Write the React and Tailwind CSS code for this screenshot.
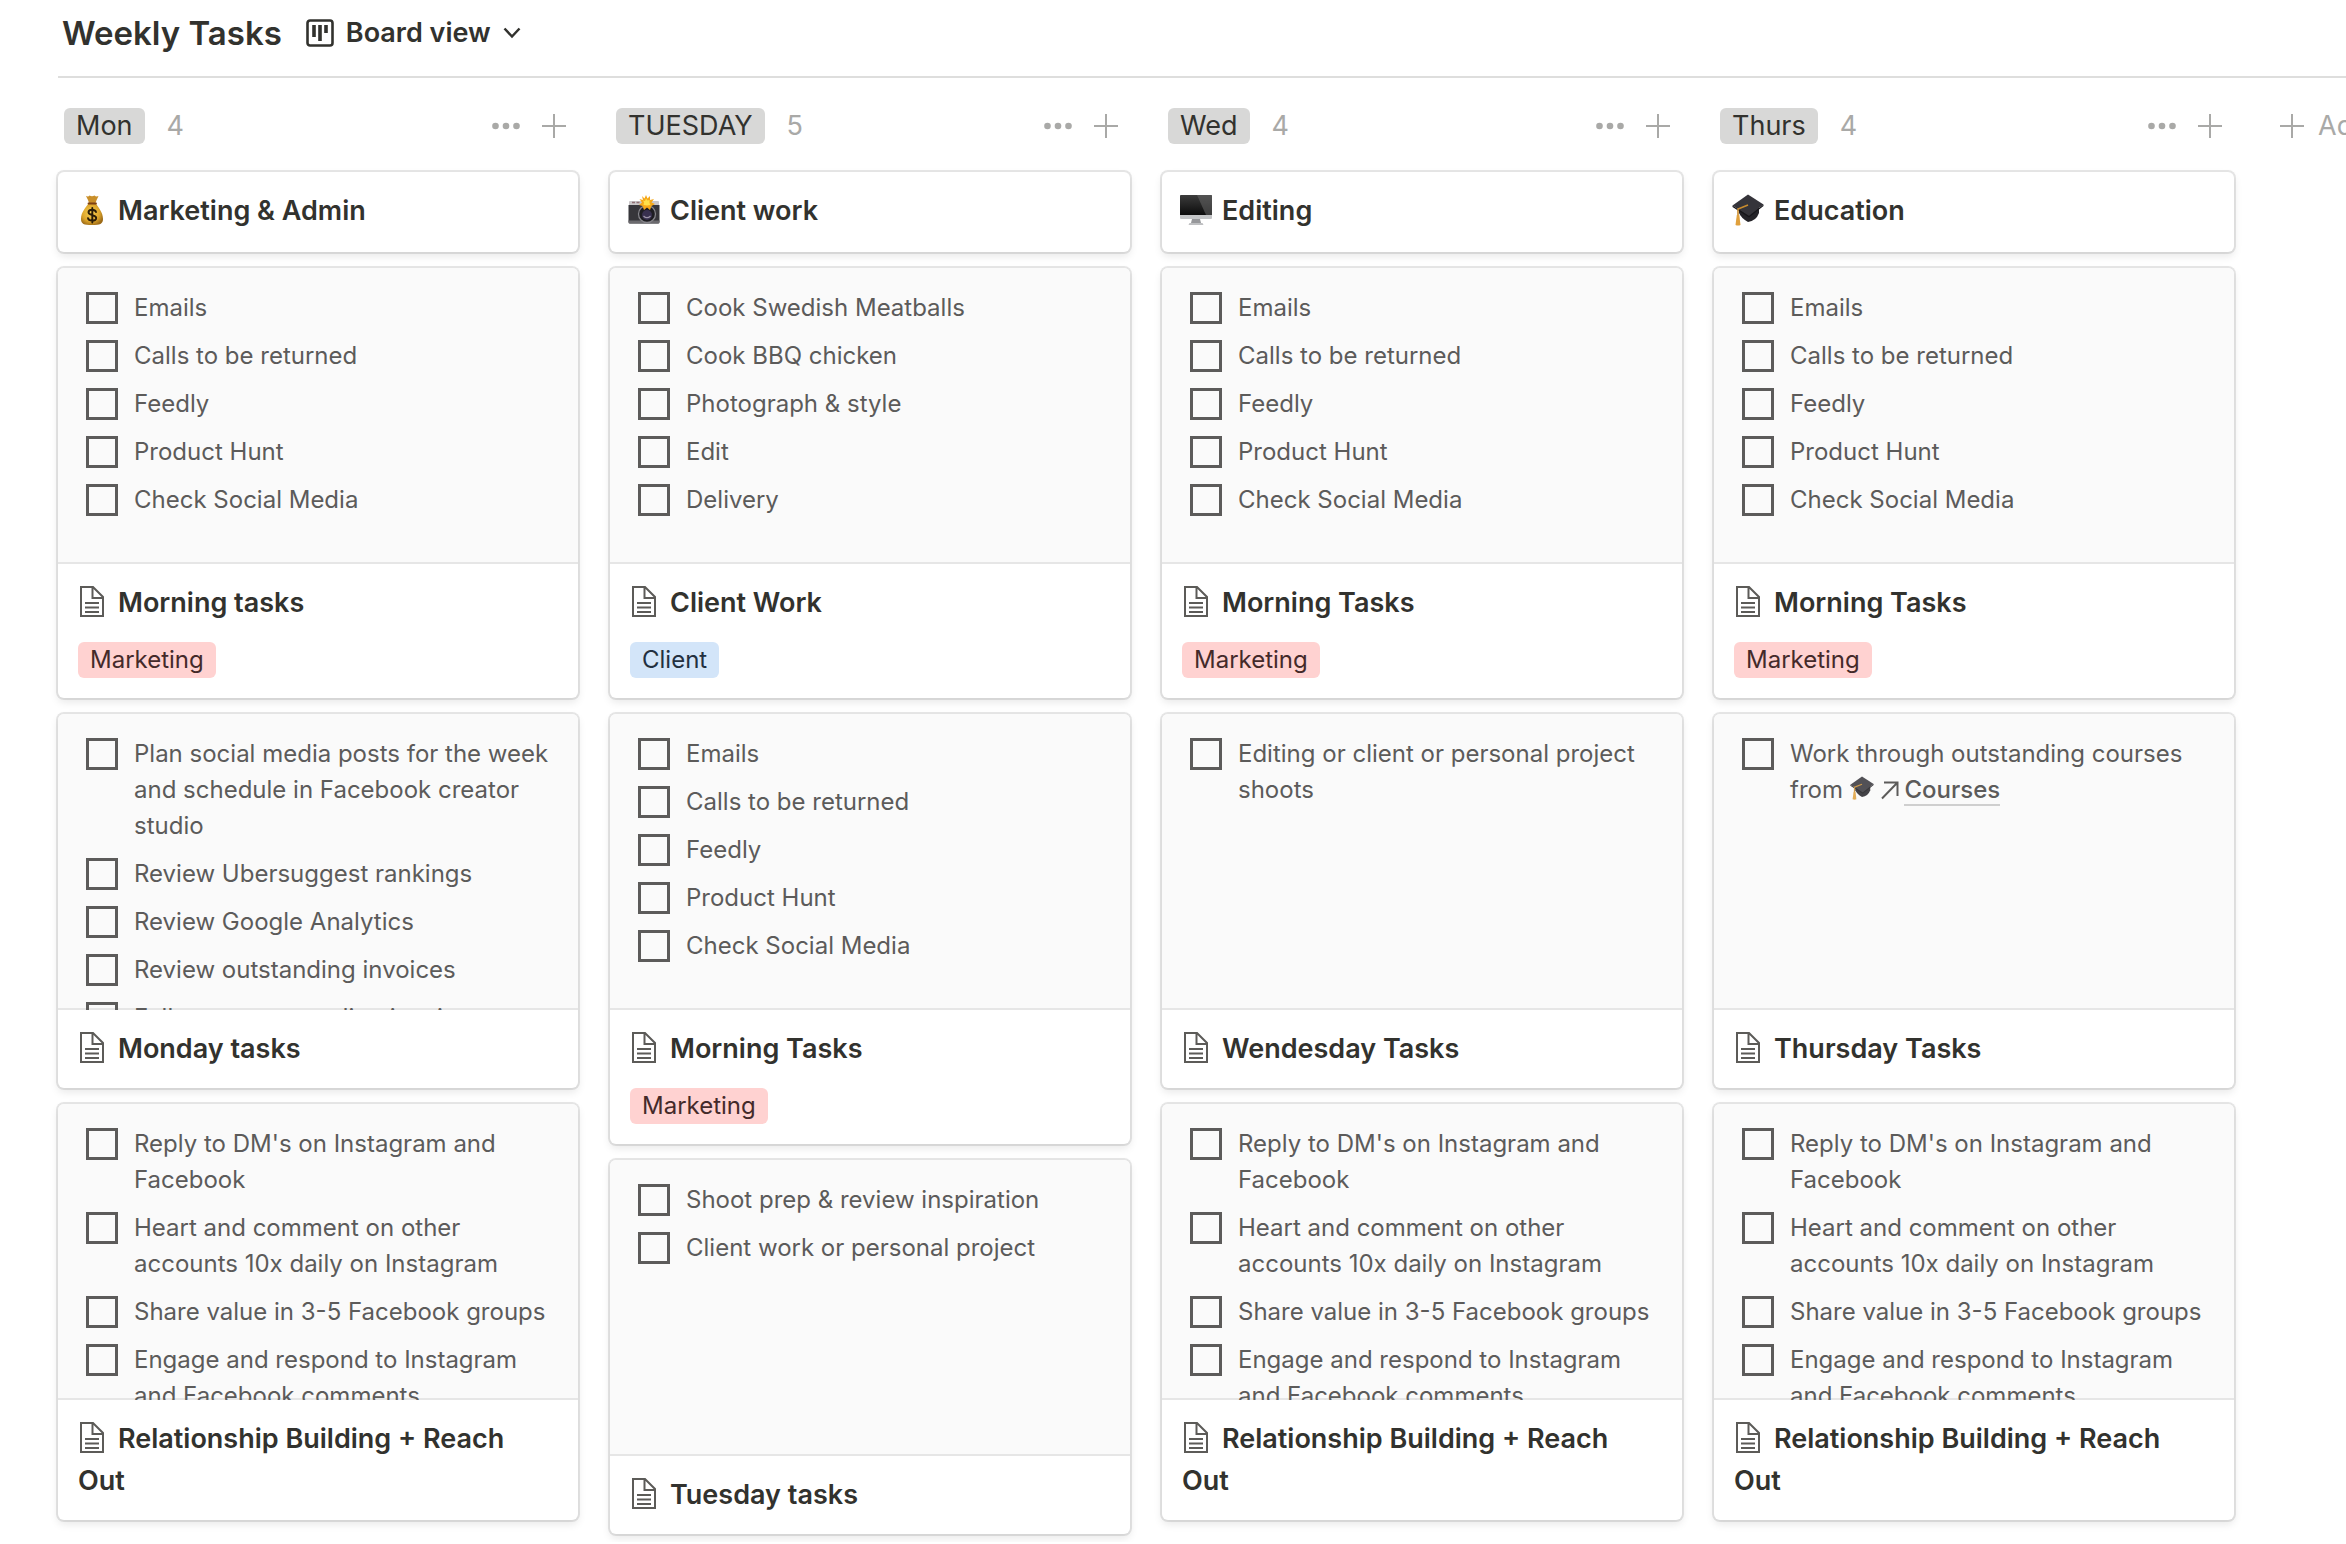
import React from "react";

const MORNING = ["Emails", "Calls to be returned", "Feedly", "Product Hunt", "Check Social Media"];
const OUTREACH = [
  "Reply to DM's on Instagram and Facebook",
  "Heart and comment on other accounts 10x daily on Instagram",
  "Share value in 3-5 Facebook groups",
  "Engage and respond to Instagram and Facebook comments",
];
const RELATION = { title: "Relationship Building + Reach Out", items: OUTREACH };

const COLUMNS = [
  {
    name: "Mon",
    count: 4,
    cards: [
      { title: "Marketing & Admin", icon: "money" },
      { title: "Morning tasks", items: MORNING, tag: "Marketing" },
      {
        title: "Monday tasks",
        items: [
          "Plan social media posts for the week and schedule in Facebook creator studio",
          "Review Ubersuggest rankings",
          "Review Google Analytics",
          "Review outstanding invoices",
          "Follow up outstanding invoices",
        ],
      },
      RELATION,
    ],
  },
  {
    name: "TUESDAY",
    count: 5,
    cards: [
      { title: "Client work", icon: "camera" },
      {
        title: "Client Work",
        items: ["Cook Swedish Meatballs", "Cook BBQ chicken", "Photograph & style", "Edit", "Delivery"],
        tag: "Client",
      },
      { title: "Morning Tasks", items: MORNING, tag: "Marketing" },
      { title: "Tuesday tasks", items: ["Shoot prep & review inspiration", "Client work or personal project"] },
    ],
  },
  {
    name: "Wed",
    count: 4,
    cards: [
      { title: "Editing", icon: "monitor" },
      { title: "Morning Tasks", items: MORNING, tag: "Marketing" },
      { title: "Wendesday Tasks", items: ["Editing or client or personal project shoots"] },
      RELATION,
    ],
  },
  {
    name: "Thurs",
    count: 4,
    cards: [
      { title: "Education", icon: "cap" },
      { title: "Morning Tasks", items: MORNING, tag: "Marketing" },
      { title: "Thursday Tasks", items: [{ text: "Work through outstanding courses from", link: "Courses" }] },
      RELATION,
    ],
  },
];

function MoneyBag() {
  return (
    <svg viewBox="0 0 32 32" className="size-8" aria-hidden="true">
      <defs>
        <radialGradient id="bag" cx="0.45" cy="0.45" r="0.6">
          <stop offset="0" stopColor="#f6cf52" />
          <stop offset="0.65" stopColor="#dda52b" />
          <stop offset="1" stopColor="#9c6a17" />
        </radialGradient>
      </defs>
      <path d="M10 2 Q12.500 3 13.500 1.500 Q16 3 18.500 1.500 Q20 3 22.500 2 Q20.500 6 19.500 9 H13 Q12 5.500 10 2Z" fill="#c98f2a" />
      <path d="M13 9 C10 13 5 18 5 25 C5 30 8 31 16 31 C24 31 27 30 27 25 C27 18 22 13 19.500 9Z" fill="url(#bag)" />
      <path d="M12.500 9.500 H20" stroke="#7c3f12" strokeWidth="1.800" strokeLinecap="round" />
      <path d="M20 18 C19 15 12.500 15 12.500 18.300 C12.500 21.800 20.200 20.500 20.200 24 C20.200 27.800 12.500 27.300 12 24.200 M16.300 14 V28.500" fill="none" stroke="#2b1d08" strokeWidth="1.900" strokeLinecap="round" />
    </svg>
  );
}

function Camera() {
  return (
    <svg viewBox="0 0 32 32" className="size-8" aria-hidden="true">
      <path d="M1 8 Q1 7 2 7 H30 Q31 7 31 8 V12 H1Z" fill="#c9c6c8" />
      <path d="M4 8.500 h3 M8.500 8.500 h3" stroke="#8f6f74" strokeWidth="1.500" />
      <path d="M0.500 11 H31.500 V28 Q31.500 29.500 30 29.500 H2 Q0.500 29.500 0.500 28Z" fill="#37363b" />
      <path d="M0.500 26.500 H31.500 V28 Q31.500 29.500 30 29.500 H2 Q0.500 29.500 0.500 28Z" fill="#6b6a6e" />
      <circle cx="19" cy="20" r="8.500" fill="#1e1d22" stroke="#85848a" strokeWidth="1.300" />
      <circle cx="19" cy="21" r="5" fill="#38304f" />
      <path d="M15.500 22 Q19 25.500 22.500 22" stroke="#9b93a8" strokeWidth="1.200" fill="none" />
      <path d="M14 2 L16.500 4.500 L18 1 L19.500 4.500 L22 2 L22 6 L26 5 L23.500 8.500 L27 10 L23.500 12 L22 16 L19 13.500 L16 16 L14.500 12 L11 11 L14 8.500 L11.500 5 L15 6Z" fill="#f6a819" />
      <path d="M18 4.500 L19.500 6.500 L21.500 6 L21.500 9 L22.500 11 L19 11.500 L15.500 11 L16 8.500 L15 6.500 L17 7Z" fill="#ffe04a" />
    </svg>
  );
}

function Monitor() {
  return (
    <svg viewBox="0 0 32 32" className="size-8" aria-hidden="true">
      <defs>
        <linearGradient id="screen" x1="0" y1="0" x2="0" y2="1">
          <stop offset="0" stopColor="#3c3c3c" />
          <stop offset="1" stopColor="#0c0c0c" />
        </linearGradient>
      </defs>
      <rect x="0" y="1" width="32" height="24" rx="1" fill="#c4c5c7" />
      <path d="M1 1 H31 Q32 1 32 2 V21 H0 V2 Q0 1 1 1Z" fill="url(#screen)" />
      <path d="M17 1 H31 Q32 1 32 2 V21 H26Z" fill="#666" opacity="0.550" />
      <path d="M12 25 H20 L21 29 H11Z" fill="#97989b" />
      <path d="M9.500 29 H22.500 L23.500 31 H8.500Z" fill="#bfc0c2" />
    </svg>
  );
}

function GradCap({ className = "size-8" }) {
  return (
    <svg viewBox="0 0 32 32" className={className} aria-hidden="true">
      <path d="M7 14 L27 12 V19 Q24 27 16 28 Q9 24 7 19Z" fill="#242328" />
      <path d="M16 0.500 L31.500 10.500 L17 22 L0.500 11.500Z" fill="#35343a" />
      <path d="M0.500 11.500 L17 22 L31.500 10.500 V12 L17 23.500 L0.500 13Z" fill="#17161a" />
      <path d="M16 11 L6 15 V25" fill="none" stroke="#c88b2e" strokeWidth="1.600" />
      <path d="M4.800 21 H7.300 L8.500 31 Q6 32 3.500 31Z" fill="#e0a03c" />
    </svg>
  );
}

function PageIcon() {
  return (
    <svg viewBox="0 0 32 32" className="size-8" fill="none" stroke="#5c5b58" strokeWidth="2" aria-hidden="true">
      <path d="M5 1 H17 L27 11 V30 H5Z M16.500 1 V12 H27 M9 17 H23 M9 21.500 H23 M9 26 H23" />
    </svg>
  );
}

const EMOJI = { money: MoneyBag, camera: Camera, monitor: Monitor, cap: GradCap };

function Plus() {
  return (
    <svg viewBox="0 0 24 24" className="size-6" stroke="currentColor" strokeWidth="2" aria-hidden="true">
      <path d="M12 0 V24 M0 12 H24" />
    </svg>
  );
}

function Todo({ item }) {
  const linked = typeof item !== "string";
  return (
    <li>
      <label className="flex items-start gap-4 py-1.5">
        <input type="checkbox" className="mt-0.5 size-8 shrink-0 appearance-none border-3 border-[#5c5b5a]" />
        <span className="min-w-0 flex-1">
          {linked ? item.text : item}
          {linked && (
            <>
              {" "}
              <GradCap className="inline-block size-6 align-[-2px] opacity-85" />{" "}
              <svg viewBox="0 0 20 20" className="inline-block size-5 align-[-2px]" fill="none" stroke="#5c5b5a" strokeWidth="2" aria-hidden="true">
                <path d="M2 18.500 L17.500 2.500 M4 2.500 H17.500 V16" />
              </svg>
              <a href="#courses" className="ml-1 border-b-2 border-[#cfcfcf] font-medium">
                {item.link}
              </a>
            </>
          )}
        </span>
      </label>
    </li>
  );
}

function Card({ card }) {
  const Icon = card.icon ? EMOJI[card.icon] : PageIcon;
  return (
    <article className="overflow-hidden rounded-md bg-white shadow-[0_0_0_2px_rgba(15,15,15,0.1),0_4px_8px_rgba(15,15,15,0.1)]">
      {card.items && (
        <ul className="h-[296px] overflow-hidden bg-[#fafafa] py-4 pr-6 pl-7 text-2xl leading-9 text-[#5c5b5a] shadow-[inset_0_-2px_0_#e6e6e6]">
          {card.items.map((item, i) => (
            <Todo key={i} item={item} />
          ))}
        </ul>
      )}
      <div className={card.items ? "px-5 py-[18px]" : "px-5 pt-[18px] pb-5"}>
        <h3 className="pr-4 text-[27px] leading-[42px] font-semibold text-[#32322e]">
          <span className="mr-2.5 -ml-0.5 inline-flex w-8 align-[-6px]">
            <Icon />
          </span>
          {card.title}
        </h3>
        {card.tag && (
          <div className="mt-[18px] mb-0.5 flex">
            <span
              className={
                card.tag === "Client"
                  ? "rounded-md bg-[#d3e5f9] px-3 text-2xl leading-9 text-[#23303f]"
                  : "rounded-md bg-[#ffd2d1] px-3 text-2xl leading-9 text-[#442a2a]"
              }
            >
              {card.tag}
            </span>
          </div>
        )}
      </div>
    </article>
  );
}

function Column({ column }) {
  return (
    <section className="w-[520px] shrink-0">
      <header className="flex h-[94px] items-center pt-0.5 pr-3 pl-1.5">
        <h2 className="rounded-md bg-[#d8d8d7] px-3 text-[27px] leading-9 text-[#32322e]">{column.name}</h2>
        <span className="ml-[22px] text-[27px] leading-9 text-[#a9a9a7]">{column.count}</span>
        <div className="ml-auto flex items-center gap-[22px] text-[#a9a9a7]">
          <button type="button" aria-label="Group options">
            <svg viewBox="0 0 28 8" className="h-2 w-7" fill="currentColor" aria-hidden="true">
              <circle cx="3.500" cy="4" r="3.300" />
              <circle cx="14" cy="4" r="3.300" />
              <circle cx="24.500" cy="4" r="3.300" />
            </svg>
          </button>
          <button type="button" aria-label="Add card">
            <Plus />
          </button>
        </div>
      </header>
      <div className="flex flex-col gap-4">
        {column.cards.map((card, i) => (
          <Card key={i} card={card} />
        ))}
      </div>
    </section>
  );
}

export default function App() {
  return (
    <main className="overflow-hidden bg-white pb-2 pl-[58px] font-[Inter,sans-serif]">
      <div className="flex h-[78px] items-center border-b-2 border-[#dededd] pb-2.5 pl-1 text-[#32322e]">
        <h1 className="text-[33px] leading-10 font-semibold">Weekly Tasks</h1>
        <button type="button" className="ml-6 flex items-center text-[27px] leading-9 font-semibold">
          <svg viewBox="0 0 28 28" className="mr-3 size-7" fill="none" stroke="currentColor" aria-hidden="true">
            <rect x="1.500" y="1.500" width="25" height="25" rx="2.500" strokeWidth="2.600" />
            <path d="M8 6 V18 M14 6 V22 M20 6 V14" strokeWidth="3.600" />
          </svg>
          Board view
          <svg viewBox="0 0 18 12" className="ml-3 h-3 w-[18px]" fill="none" stroke="currentColor" strokeWidth="2.500" aria-hidden="true">
            <path d="M1.500 1.500 L9 9.500 L16.500 1.500" />
          </svg>
        </button>
      </div>
      <div className="flex gap-8">
        {COLUMNS.map((column) => (
          <Column key={column.name} column={column} />
        ))}
        <div className="flex h-[94px] shrink-0 items-center pt-0.5 pl-3.5">
          <button type="button" className="flex items-center gap-3.5 text-[27px] leading-9 whitespace-nowrap text-[#a9a9a7]">
            <Plus />
            Add a group
          </button>
        </div>
      </div>
    </main>
  );
}
